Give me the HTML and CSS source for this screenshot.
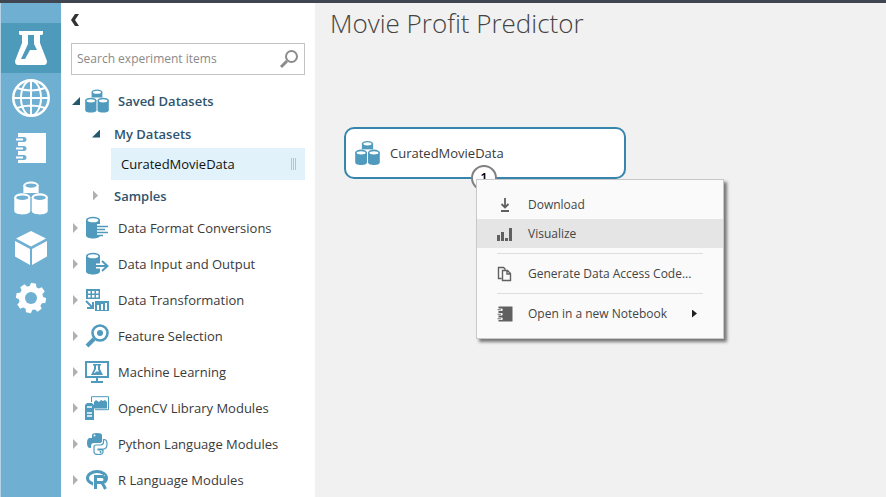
FILE: index.html
```html
<!DOCTYPE html>
<html lang="en">
<head>
<meta charset="utf-8">
<title>Movie Profit Predictor</title>
<link rel="stylesheet" href="styles.css">
</head>
<body>
<svg class="defs" aria-hidden="true">
  <symbol id="datasets" viewBox="0 0 24 24">
    <g fill="currentColor">
      <path d="M6.600 3v5.500h10.800V3z"/><ellipse cx="12" cy="3" rx="5.400" ry="2.600"/>
      <path d="M.2 11.500v9.700c0 3.200 11.300 3.200 11.300 0v-9.700zM12.500 11.500v9.700c0 3.200 11.300 3.200 11.300 0v-9.700z"/>
      <ellipse cx="5.850" cy="11.400" rx="5.650" ry="2.700"/><ellipse cx="18.150" cy="11.400" rx="5.650" ry="2.700"/>
    </g>
    <g class="lid"><ellipse cx="12" cy="3.200" rx="4" ry="1.500"/><ellipse cx="5.850" cy="11.800" rx="4.300" ry="1.600"/><ellipse cx="18.150" cy="11.800" rx="4.300" ry="1.600"/></g>
  </symbol>
  <symbol id="cylinder" viewBox="0 0 24 24">
    <path fill="currentColor" d="M1 4v15.500c0 4 14 4 14 0V4z"/><ellipse cx="8" cy="4" rx="7" ry="3.200" fill="currentColor"/><ellipse cx="8" cy="4.300" rx="5.200" ry="2" fill="#fff"/>
  </symbol>
  <symbol id="notebook" viewBox="0 0 32 32">
    <path fill="currentColor" d="M3 1h28v30H3v-3h6a2.500 2.500 0 0 0 0-5H3v-4h6a2.500 2.500 0 0 0 0-5H3v-4h6a2.500 2.500 0 0 0 0-5H3z"/>
    <path fill="none" stroke="currentColor" stroke-width="1.800" d="M1 7.500h7M1 16.500h7M1 25.500h7"/>
  </symbol>
</svg>

<header class="topbar"></header>
<div class="app">
  <nav class="rail" aria-label="Workspace">
    <a class="rail-item active" href="#experiments" aria-label="Experiments">
      <svg width="34" height="36" viewBox="0 0 34 36"><path fill="#fff" d="M5 1h24v3l-1 1h-2v8l7 18q0 4-3 4H4q-3 0-3-4l7-18V5H6L5 4z"/><path fill="#4d9abb" d="M14 5h6v9l3 6h-7l-5 9H7l7-15z"/></svg>
    </a>
    <a class="rail-item" href="#services" aria-label="Web services">
      <svg width="38" height="38" viewBox="0 0 38 38" fill="none" stroke="#fff" stroke-width="2"><circle cx="19" cy="19" r="17.700" stroke-width="2.500"/><ellipse cx="19" cy="19" rx="10" ry="17.500"/><path d="M19 1v36M1 19h36M5 9q14 5 28 0M5 29q14-5 28 0"/></svg>
    </a>
    <a class="rail-item" href="#notebooks" aria-label="Notebooks"><svg width="32" height="32"><use href="#notebook"/></svg></a>
    <a class="rail-item" href="#datasets-page" aria-label="Datasets"><svg class="white-datasets" width="34" height="36"><use href="#datasets"/></svg></a>
    <a class="rail-item" href="#models" aria-label="Trained models">
      <svg width="34" height="36" viewBox="0 0 34 36" fill="#fff"><path d="M17 1l15 7.500-15 8L2 8.500zM1 11l15 8v16L1 26.500zM33 11l-15 8v16l15-8.500z"/></svg>
    </a>
    <a class="rail-item" href="#settings" aria-label="Settings">
      <svg width="32" height="32" viewBox="-16 -16 32 32"><g fill="#fff"><circle r="12"/><path transform="rotate(10)" d="M-3.500-11l1-4h5l1 4v22l-1 4h-5l-1-4z"/><path transform="rotate(55)" d="M-3.500-11l1-4h5l1 4v22l-1 4h-5l-1-4z"/><path transform="rotate(100)" d="M-3.500-11l1-4h5l1 4v22l-1 4h-5l-1-4z"/><path transform="rotate(145)" d="M-3.500-11l1-4h5l1 4v22l-1 4h-5l-1-4z"/></g><circle r="6" fill="#6fb0d2"/></svg>
    </a>
  </nav>

  <aside class="panel">
    <button class="collapse" aria-label="Collapse panel"><svg width="8" height="12" viewBox="0 0 8 12"><path d="M4 0h4L4 6l4 6H4L0 6z" fill="#333"/></svg></button>
    <div class="search">
      <input type="text" placeholder="Search experiment items" aria-label="Search experiment items">
      <svg width="20" height="20" viewBox="0 0 20 20" fill="none" stroke="#8c8c8c"><circle cx="12.500" cy="7.500" r="5.500" stroke-width="2"/><path d="M8 12l-6 6" stroke-width="3"/></svg>
    </div>
    <ul class="tree">
      <li class="row strong"><i class="arrow open"></i><svg class="icon"><use href="#datasets"/></svg><span>Saved Datasets</span></li>
      <li class="row sub strong"><i class="arrow open"></i><span>My Datasets</span></li>
      <li class="leaf"><span>CuratedMovieData</span><i class="grip"></i></li>
      <li class="row sub strong"><i class="arrow"></i><span>Samples</span></li>
      <li class="row"><i class="arrow"></i><svg class="icon" viewBox="0 0 24 24"><use href="#cylinder"/><path d="M12 8h12v11H12z" fill="#fff"/><path d="M12 10.500h11M12 13.500h8M12 16.500h11M12 19.500h6" stroke="currentColor" stroke-width="1.600"/></svg><span>Data Format Conversions</span></li>
      <li class="row"><i class="arrow"></i><svg class="icon" viewBox="0 0 24 24"><use href="#cylinder"/><path d="M11 14h11M17 9l5.500 5-5.500 5" fill="none" stroke="#fff" stroke-width="5"/><path d="M11 14h11M17 9l5.500 5-5.500 5" fill="none" stroke="currentColor" stroke-width="2"/></svg><span>Data Input and Output</span></li>
      <li class="row"><i class="arrow"></i><svg class="icon" viewBox="0 0 24 24"><path fill="currentColor" d="M1 1h14v10H1zM10 13h14v10H10z"/><path fill="#fff" d="M3 3h2.500v2.500H3zm4 0h2.500v2.500H7zm4 0h2.500v2.500H11zM3 7h2.500v2.500H3zm4 0h2.500v2.500H7zm4 0h2.500v2.500H11zM12 17h2v5h-2zm4-1h2v6h-2zm4-1h2v7h-2z"/><path d="M1 13l6 6M8 14v6H2" fill="none" stroke="currentColor" stroke-width="2"/></svg><span>Data Transformation</span></li>
      <li class="row"><i class="arrow"></i><svg class="icon" viewBox="0 0 24 24"><g fill="none" stroke="currentColor"><circle cx="15" cy="9" r="7.500" stroke-width="2.500"/><path d="M9 15l-7 7" stroke-width="4"/></g><circle cx="15" cy="9" r="3" fill="currentColor"/></svg><span>Feature Selection</span></li>
      <li class="row"><i class="arrow"></i><svg class="icon" viewBox="0 0 24 24"><path d="M1 2h22v15H1z" fill="none" stroke="currentColor" stroke-width="2"/><path d="M8 4h8v1.500h-1V9l3 6H6l3-6V5.500H8zM11 18h2v3h5v2H6v-2h5z" fill="currentColor"/><path d="M11 5.500h2v4l1 2h-3l-1 1.500H9l2-4z" fill="#fff"/></svg><span>Machine Learning</span></li>
      <li class="row"><i class="arrow"></i><svg class="icon" viewBox="0 0 24 24"><path d="M6.500 6V.7h17v13H10" fill="none" stroke="currentColor"/><path fill="currentColor" d="M9 12.500V6l2-2 3 2 2-2 2 1 2-1 2 2v6.500zM0 9l2-2h5l2 2v15H0z"/><path d="M2 11h5M2 17h5M2 20h5" stroke="#fff" stroke-width="1.500"/></svg><span>OpenCV Library Modules</span></li>
      <li class="row"><i class="arrow"></i><svg class="icon" viewBox="0 0 24 24"><path fill="currentColor" d="M7 3q0-2 5-2t5 2v6q0 2-3 2H9q-3 0-3 3v2H5q-3 0-3-5t3-5h7V6H7z"/><path fill="none" stroke="currentColor" stroke-width="1.200" d="M18.500 7.500H19q3 0 3 4.500t-3 5h-6v1h5v2q0 2.500-4.500 2.500T9 20v-5q0-2 2-2h4.500q3 0 3-3z"/><circle cx="9.500" cy="3.500" r="1" fill="#fff"/><circle cx="15.500" cy="20" r="1" fill="currentColor"/></svg><span>Python Language Modules</span></li>
      <li class="row"><i class="arrow"></i><svg class="icon" viewBox="0 0 24 24"><ellipse cx="12" cy="10" rx="9.500" ry="6.500" fill="none" stroke="currentColor" stroke-width="3"/><path d="M8 7h12v15H8z" fill="#fff"/><path d="M10.500 21V8.500H17q3 0 3 3t-3 3h-6M15.500 14.500q2 0 5 6.500" fill="none" stroke="currentColor" stroke-width="3"/></svg><span>R Language Modules</span></li>
    </ul>
  </aside>

  <main class="canvas">
    <h1>Movie Profit Predictor</h1>
    <div class="node"><svg class="icon"><use href="#datasets"/></svg><span>CuratedMovieData</span></div>
    <div class="port">1</div>
    <div class="menu" role="menu">
      <button role="menuitem"><svg width="16" height="16" viewBox="0 0 16 16"><path d="M8 1v9M4.500 7L8 10.500 11.500 7M4 14h8" fill="none" stroke="currentColor" stroke-width="1.800"/></svg>Download</button>
      <button role="menuitem" class="hover"><svg width="16" height="16" viewBox="0 0 16 16"><path d="M0 9h3v6H0zM4 6h3v9H4zM8 12h3v3H8zM12 2h3v13h-3z" fill="currentColor"/></svg>Visualize</button>
      <hr>
      <button role="menuitem"><svg width="16" height="16" viewBox="0 0 16 16"><path d="M4.500 12.500h-3v-11h5l2 2M5.500 4.500h5l3 3v7h-8zM10 4.500V8h3.500" fill="none" stroke="currentColor" stroke-width="1.400"/></svg>Generate Data Access Code...</button>
      <hr>
      <button role="menuitem"><svg width="16" height="16"><use href="#notebook"/></svg>Open in a new Notebook<i class="more"></i></button>
    </div>
  </main>
</div>
</body>
</html>
```
FILE: styles.css
```css
* { box-sizing: border-box; }
body {
  margin: 0;
  height: 100vh;
  display: flex;
  flex-direction: column;
  overflow: hidden;
  font: 13px/20px "Open Sans", "Noto Sans", sans-serif;
  color: #3a3a3a;
}
.defs { position: absolute; width: 0; height: 0; }
svg { display: block; flex: none; }
button { font: inherit; color: inherit; border: 0; background: none; padding: 0; }
.topbar { height: 3px; flex: none; background: #404552; }
.app { flex: 1; min-height: 0; display: flex; }

.rail {
  width: 61px;
  flex: none;
  padding-top: 20px;
  background: #6fb0d2;
  border-left: 1px solid #b5d3e3;
}
.rail-item {
  height: 50px;
  display: flex;
  align-items: center;
  justify-content: center;
  color: #fff;
}
.rail-item.active { background: #4d9abb; }
.lid { fill: var(--lid, #fff); }
.white-datasets { --lid: #6fb0d2; }

.panel { width: 254px; flex: none; padding: 11px 10px 0; background: #fff; }
.collapse { display: block; height: 12px; margin-bottom: 17px; }
.search {
  height: 32px;
  display: flex;
  align-items: center;
  padding: 0 5px;
  border: 1px solid #c3c3c3;
}
.search input {
  flex: 1;
  min-width: 0;
  padding: 0;
  border: 0;
  outline: 0;
  font: inherit;
  font-size: 12px;
  color: #333;
}
.search input::placeholder { color: #8a8a8a; opacity: 1; }

.tree { list-style: none; margin: 8px 0 0; padding: 0; }
.row { height: 36px; display: flex; align-items: center; white-space: nowrap; }
.row.sub { height: 29px; padding-left: 20px; }
.strong { font-weight: 600; color: #2f546d; }
.icon { width: 24px; height: 24px; margin-right: 9px; color: #4f9abd; }
.arrow { width: 14px; flex: none; }
.sub .arrow { width: 23px; }
.arrow::before {
  content: "";
  display: block;
  width: 5px;
  height: 10px;
  margin-left: 2px;
  background: #b0b0b0;
  clip-path: polygon(0 0, 100% 50%, 0 100%);
}
.arrow.open::before {
  width: 8px;
  height: 8px;
  margin-left: 1px;
  background: #24586f;
  clip-path: polygon(100% 0, 100% 100%, 0 100%);
}
.leaf {
  height: 32px;
  margin: 0 0 1px 40px;
  padding: 0 9px 0 10px;
  display: flex;
  align-items: center;
  justify-content: space-between;
  background: #e1f2fa;
  color: #111;
}
.grip {
  width: 5px;
  height: 12px;
  background: repeating-linear-gradient(90deg, #b9c3c8 0 1px, transparent 1px 2px);
}

.canvas { flex: 1; min-width: 0; position: relative; background: #f1f1f1; }
h1 { margin: 0; padding-left: 15px; font-size: 26px; line-height: 40px; font-weight: 300; color: #444; }
.node {
  position: absolute;
  left: 29px;
  top: 124px;
  width: 282px;
  height: 52px;
  display: flex;
  align-items: center;
  padding-left: 9px;
  border: 2px solid #3585ad;
  border-radius: 10px;
  background: #fff;
}
.node .icon { width: 25px; height: 26px; margin-right: 10px; }
.port {
  position: absolute;
  left: 156px;
  top: 162px;
  width: 26px;
  height: 26px;
  border: 2px solid #808080;
  border-radius: 50%;
  background: #fff;
  text-align: center;
  line-height: 21px;
  font-weight: 600;
  color: #000;
}
.menu {
  position: absolute;
  left: 161px;
  top: 176px;
  width: 248px;
  padding: 10px 0;
  border: 1px solid #c8c8c8;
  background: #fafafa;
  box-shadow: 3px 3px 3px #777;
  font-size: 12px;
  color: #444;
}
.menu button {
  width: 100%;
  height: 29px;
  display: flex;
  align-items: center;
  gap: 15px;
  padding: 0 26px 0 20px;
}
.menu button svg { color: #606060; }
.menu .hover { background: #e5e5e5; }
.menu hr { height: 1px; margin: 5px 20px; border: 0; background: #dedede; }
.more {
  width: 5px;
  height: 8px;
  margin-left: auto;
  background: #222;
  clip-path: polygon(0 0, 100% 50%, 0 100%);
}
```
